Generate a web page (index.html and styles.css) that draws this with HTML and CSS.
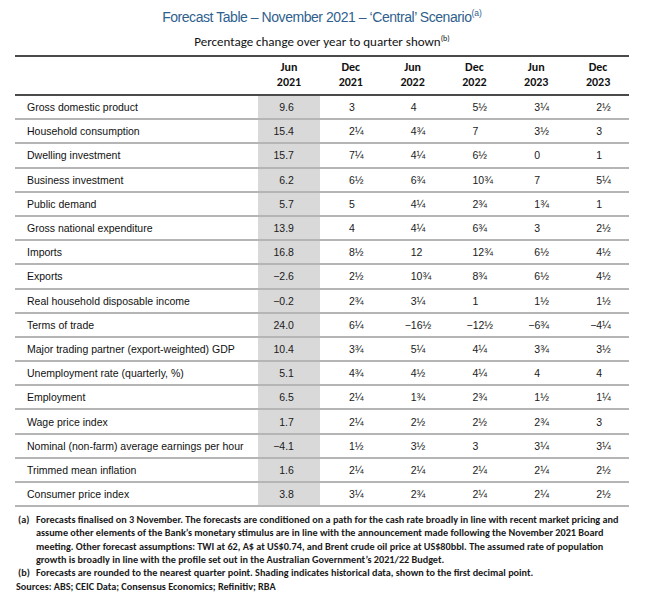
FILE: index.html
```html
<!DOCTYPE html>
<html>
<head>
<meta charset="utf-8">
<link rel="stylesheet" href="styles.css">
</head>
<body>
<div class="page">
  <h1 class="title">Forecast Table – November 2021 – ‘Central’ Scenario<sup>(a)</sup></h1>
  <p class="subtitle">Percentage change over year to quarter shown<sup>(b)</sup></p>
  <table class="ftable">
    <colgroup>
      <col class="c-label"><col class="c-num"><col class="c-num"><col class="c-num"><col class="c-num"><col class="c-num"><col class="c-num">
    </colgroup>
    <thead>
      <tr>
        <th></th>
        <th>Jun<br>2021</th><th>Dec<br>2021</th><th>Jun<br>2022</th><th>Dec<br>2022</th><th>Jun<br>2023</th><th>Dec<br>2023</th>
      </tr>
    </thead>
    <tbody>
      <tr><td class="lbl">Gross domestic product</td><td class="hist">9.6</td><td>3</td><td>4</td><td>5½</td><td>3¼</td><td>2½</td></tr>
      <tr><td class="lbl">Household consumption</td><td class="hist">15.4</td><td>2¼</td><td>4¾</td><td>7</td><td>3½</td><td>3</td></tr>
      <tr><td class="lbl">Dwelling investment</td><td class="hist">15.7</td><td>7¼</td><td>4¼</td><td>6½</td><td>0</td><td>1</td></tr>
      <tr><td class="lbl">Business investment</td><td class="hist">6.2</td><td>6½</td><td>6¾</td><td>10¾</td><td>7</td><td>5¼</td></tr>
      <tr><td class="lbl">Public demand</td><td class="hist">5.7</td><td>5</td><td>4¼</td><td>2¾</td><td>1¾</td><td>1</td></tr>
      <tr><td class="lbl">Gross national expenditure</td><td class="hist">13.9</td><td>4</td><td>4¼</td><td>6¾</td><td>3</td><td>2½</td></tr>
      <tr><td class="lbl">Imports</td><td class="hist">16.8</td><td>8½</td><td>12</td><td>12¾</td><td>6½</td><td>4½</td></tr>
      <tr><td class="lbl">Exports</td><td class="hist">−2.6</td><td>2½</td><td>10¾</td><td>8¾</td><td>6½</td><td>4½</td></tr>
      <tr><td class="lbl">Real household disposable income</td><td class="hist">−0.2</td><td>2¾</td><td>3¼</td><td>1</td><td>1½</td><td>1½</td></tr>
      <tr><td class="lbl">Terms of trade</td><td class="hist">24.0</td><td>6¼</td><td class="neg">−16½</td><td class="neg">−12½</td><td class="neg">−6¾</td><td class="neg">−4¼</td></tr>
      <tr><td class="lbl">Major trading partner (export-weighted) GDP</td><td class="hist">10.4</td><td>3¾</td><td>5¼</td><td>4¼</td><td>3¾</td><td>3½</td></tr>
      <tr><td class="lbl">Unemployment rate (quarterly, %)</td><td class="hist">5.1</td><td>4¾</td><td>4½</td><td>4¼</td><td>4</td><td>4</td></tr>
      <tr><td class="lbl">Employment</td><td class="hist">6.5</td><td>2¼</td><td>1¾</td><td>2¾</td><td>1½</td><td>1¼</td></tr>
      <tr><td class="lbl">Wage price index</td><td class="hist">1.7</td><td>2¼</td><td>2½</td><td>2½</td><td>2¾</td><td>3</td></tr>
      <tr><td class="lbl">Nominal (non-farm) average earnings per hour</td><td class="hist">−4.1</td><td>1½</td><td>3½</td><td>3</td><td>3¼</td><td>3¼</td></tr>
      <tr><td class="lbl">Trimmed mean inflation</td><td class="hist">1.6</td><td>2¼</td><td>2¼</td><td>2¼</td><td>2¼</td><td>2½</td></tr>
      <tr><td class="lbl">Consumer price index</td><td class="hist">3.8</td><td>3¼</td><td>2¾</td><td>2¼</td><td>2¼</td><td>2½</td></tr>
    </tbody>
  </table>
  <div class="notes">
    <div class="note"><span class="mark">(a)</span><span class="ntext">Forecasts finalised on 3 November. The forecasts are conditioned on a path for the cash rate broadly in line with recent market pricing and<br>assume other elements of the Bank’s monetary stimulus are in line with the announcement made following the November 2021 Board<br>meeting. Other forecast assumptions: TWI at 62, A$ at US$0.74, and Brent crude oil price at US$80bbl. The assumed rate of population<br>growth is broadly in line with the profile set out in the Australian Government’s 2021/22 Budget.</span></div>
    <div class="note"><span class="mark">(b)</span><span class="ntext">Forecasts are rounded to the nearest quarter point. Shading indicates historical data, shown to the first decimal point.</span></div>
    <div class="sources">Sources: ABS; CEIC Data; Consensus Economics; Refinitiv; RBA</div>
  </div>
</div>
</body>
</html>
```
FILE: styles.css
```css
html, body {
  margin: 0;
  padding: 0;
  background: #ffffff;
}

.page {
  width: 614px;
  margin-left: 15px;
  padding-top: 8px;
}

.title {
  margin: 0;
  text-align: center;
  font-family: "Liberation Sans Narrow", "Liberation Sans", Arial, sans-serif;
  font-weight: normal;
  font-size: 14px;
  letter-spacing: -0.45px;
  line-height: 18px;
  color: #2f5f8e;
}

.title sup {
  font-size: 8.5px;
  letter-spacing: 0;
  vertical-align: 6px;
  line-height: 0;
}

.subtitle {
  margin: 8px 0 0 0;
  text-align: center;
  font-family: Carlito, Lato, "Open Sans", sans-serif;
  font-size: 13px;
  line-height: 16px;
  color: #111;
}

.subtitle sup {
  font-size: 8px;
  vertical-align: 5px;
  line-height: 0;
}

.ftable {
  margin-top: 5px;
  width: 614px;
  border-collapse: collapse;
  table-layout: fixed;
  border-top: 2px solid #4a4a4a;
}

.c-label { width: 243px; }
.c-num { width: 61.8px; }

.ftable thead th {
  font-family: Carlito, Lato, "Open Sans", sans-serif;
  font-weight: bold;
  font-size: 12px;
  line-height: 15px;
  color: #111;
  text-align: center;
  padding: 3px 0 4px 0;
  border-bottom: 2px solid #4a4a4a;
}

.ftable tbody td {
  height: 22.2px;
  padding: 0;
  border-bottom: 2px solid #b5b5b5;
  font-family: "Liberation Sans", Arial, sans-serif;
  font-size: 10.5px;
  color: #1a1a1a;
  text-align: left;
  padding-left: 29px;
  vertical-align: middle;
}

.ftable tbody td.lbl {
  padding-left: 12px;
  color: #111;
}

.ftable tbody td.hist {
  background: #d9d9d9;
  text-align: right;
  padding-left: 0;
  padding-right: 26px;
}

.ftable tbody td.neg {
  text-indent: -6px;
}

.notes {
  margin-top: 6px;
  font-family: Carlito, Lato, "Open Sans", sans-serif;
  font-weight: bold;
  font-size: 10.2px;
  line-height: 13.3px;
  color: #1a1a1a;
}

.note {
  display: flex;
  padding-left: 3px;
}

.mark {
  flex: 0 0 18px;
}

.ntext {
  white-space: nowrap;
}

.sources {
  padding-left: 1px;
}
```
